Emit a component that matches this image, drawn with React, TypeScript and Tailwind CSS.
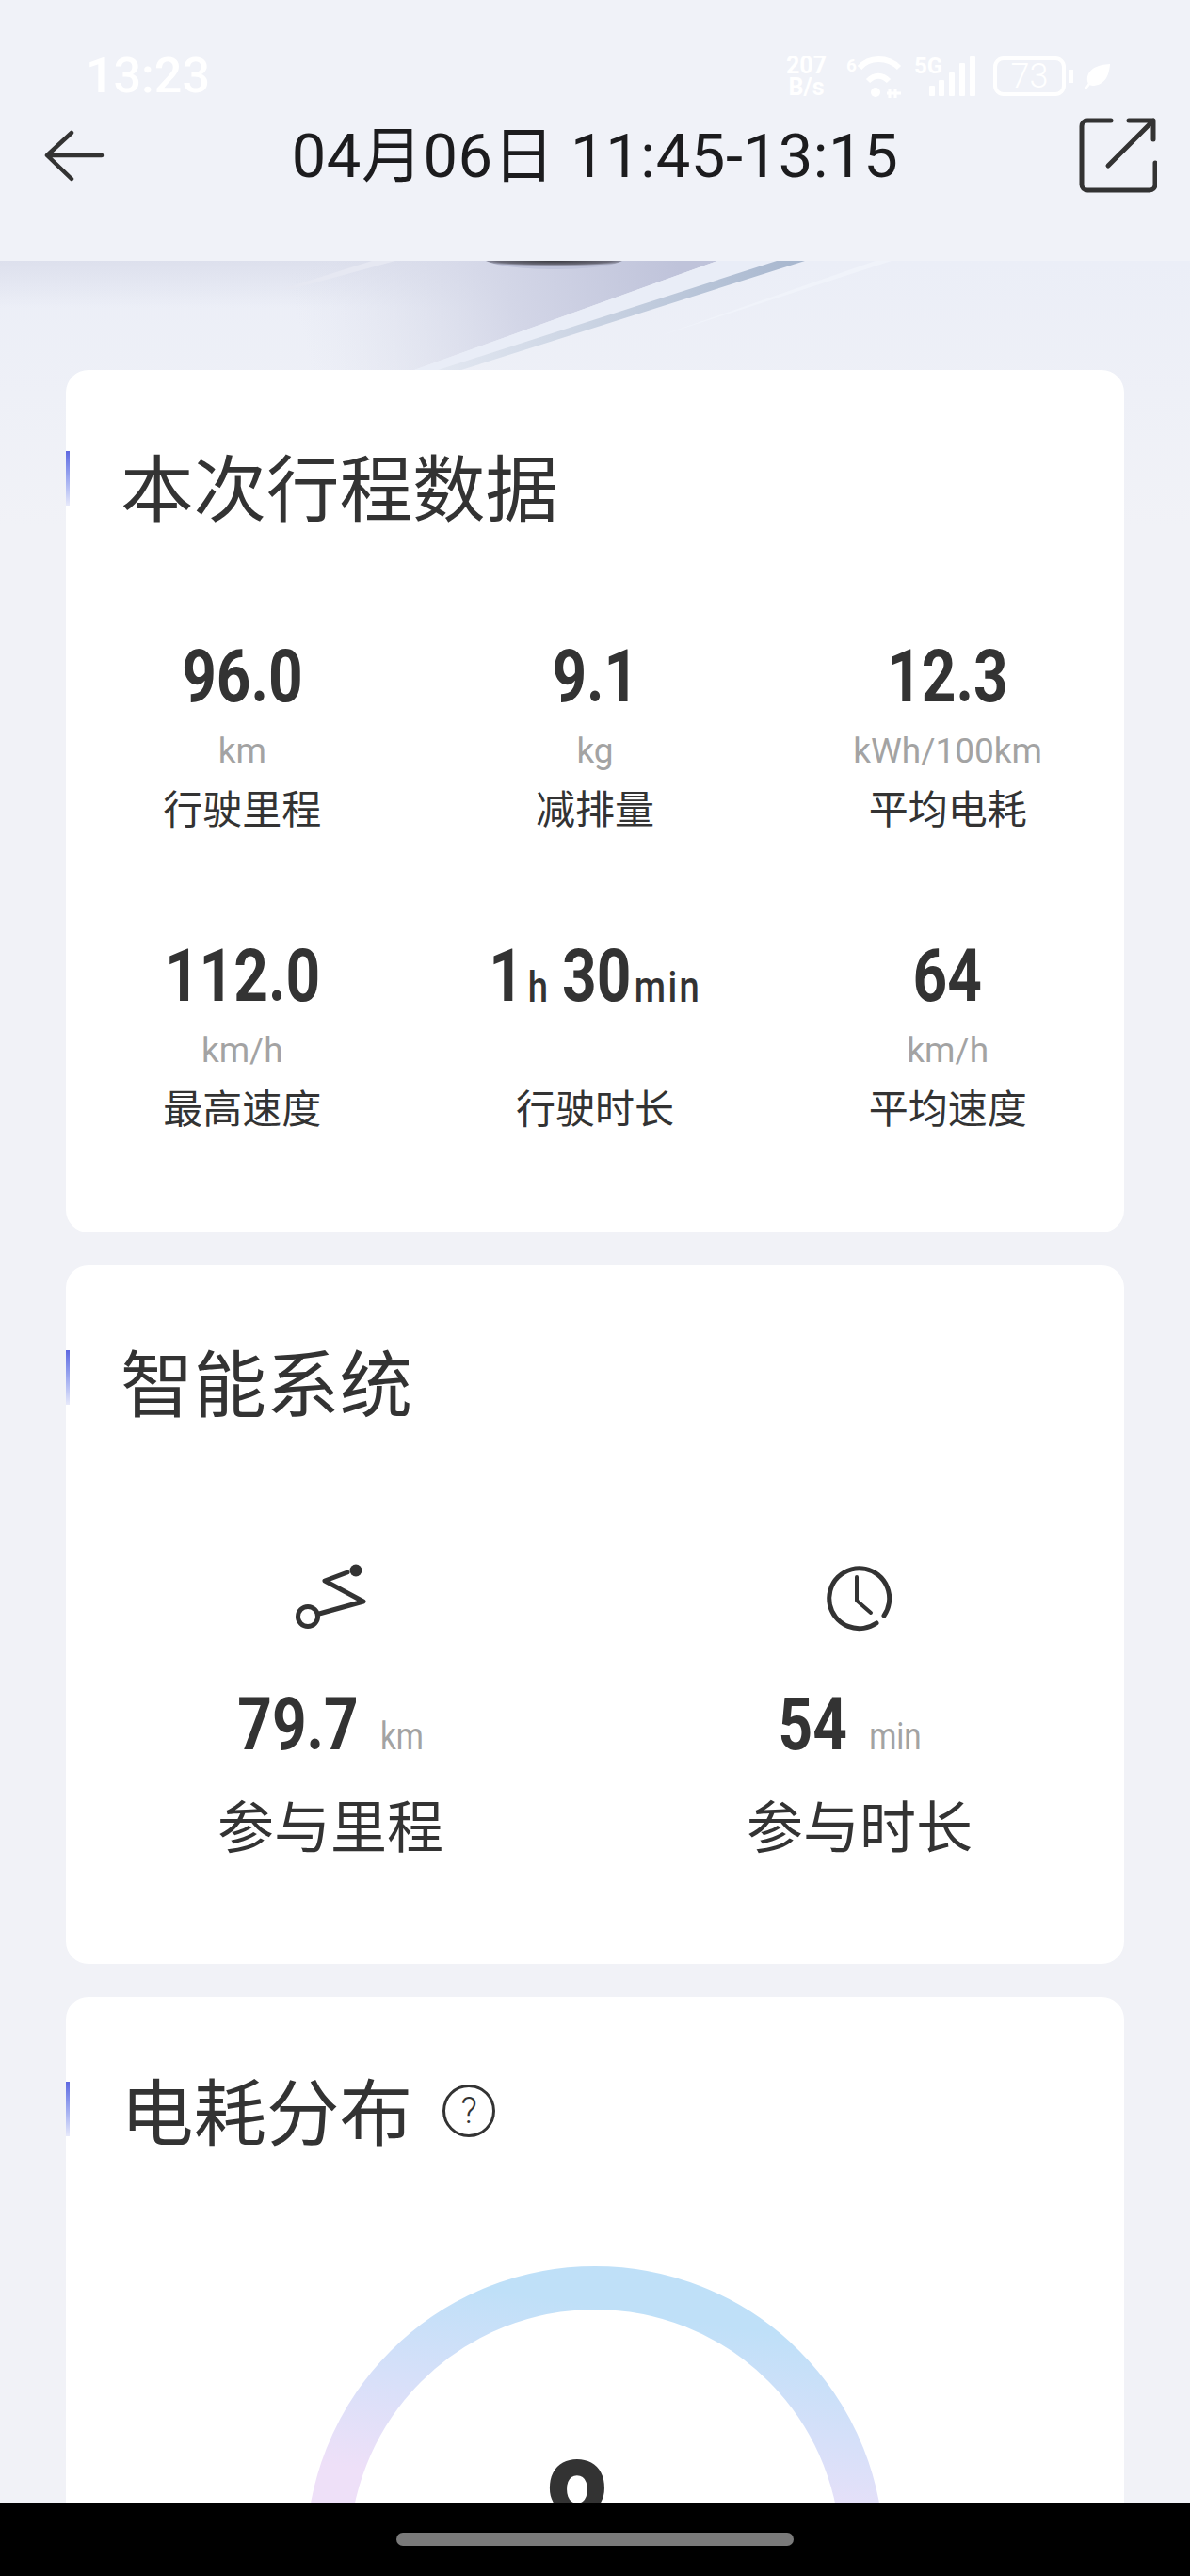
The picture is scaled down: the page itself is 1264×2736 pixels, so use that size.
import type { ReactNode } from 'react'

const numFont = "font-['Roboto',sans-serif]"

const stats = [
  { value: '96.0', unit: 'km', label: '行驶里程' },
  { value: '9.1', unit: 'kg', label: '减排量' },
  { value: '12.3', unit: 'kWh/100km', label: '平均电耗' },
  { value: '112.0', unit: 'km/h', label: '最高速度' },
  { value: null, unit: '', label: '行驶时长' },
  { value: '64', unit: 'km/h', label: '平均速度' },
]

function StatusBar() {
  return (
    <div className="flex h-[124px] items-start justify-between pl-[91px] pr-[84px] pt-[52px] text-white">
      <span className="font-['Roboto',sans-serif] text-[52px] font-medium leading-[58px]">13:23</span>
      <div className="mt-[6px] flex items-center">
        <div className="w-[47px] text-center font-['Roboto',sans-serif] text-[25px] font-bold leading-[23px]">
          207
          <br />
          B/s
        </div>
        <svg className="ml-[19px]" width="60" height="46" viewBox="0 0 60 46" fill="none" stroke="currentColor">
          <text x="0" y="18" fontSize="19" fontWeight="700" fontFamily="Roboto" fill="currentColor" stroke="none">6</text>
          <path d="M14 14C24 2 44 2 56 14" strokeWidth="6" />
          <path d="M23 28C30 21 38 21 45 28" strokeWidth="6" />
          <circle cx="31" cy="40" r="5" fill="currentColor" stroke="none" />
          <path d="M46 46V36M52 36V46M43 41h15" strokeWidth="3" />
        </svg>
        <svg className="ml-[12px]" width="66" height="46" viewBox="0 0 66 46" fill="currentColor">
          <text x="0" y="20" fontSize="24" fontWeight="700" fontFamily="Roboto">5G</text>
          <rect x="16" y="33" width="6" height="11" rx="1" />
          <rect x="26" y="27" width="6" height="17" rx="1" />
          <rect x="37" y="19" width="6" height="25" rx="1" />
          <rect x="48" y="9" width="6" height="35" rx="1" />
          <rect x="59" y="2" width="6" height="42" rx="1" />
        </svg>
        <div className="ml-[18px] flex h-[42px] w-[77px] items-center justify-center rounded-[11px] border-[4px] border-white font-['Roboto',sans-serif] text-[36px] font-light">
          73
        </div>
        <div className="ml-[3px] h-[14px] w-[5px] bg-white" />
        <svg className="ml-[12px]" width="28" height="30" viewBox="0 0 30 30" fill="currentColor">
          <path d="M29 1C15 2 4 6 3 18c0 2 .5 4 1 5L0 29l2 1 4-5c2 1 4 1 6 .5C25 23 28 12 29 1z" />
        </svg>
      </div>
    </div>
  )
}

function Header() {
  return (
    <div className="h-[277px] bg-[#f0f2f8]">
      <StatusBar />
      <div className="relative flex h-[82px] items-center justify-center">
        <svg className="absolute left-[46px] top-[14px]" width="66" height="56" viewBox="0 0 66 56" fill="none" stroke="#333" strokeWidth="4.5" strokeLinecap="round" strokeLinejoin="round">
          <path d="M62 27H5M30 3 4 27l26 25" />
        </svg>
        <span className="mt-[2px] font-['Roboto','Noto_Sans_CJK_SC',sans-serif] text-[65px] leading-[82px] tracking-[0.6px] text-[#1c1c1e]">
          04月06日 11:45-13:15
        </span>
        <svg className="absolute left-[1145px] top-[0px]" width="84" height="84" viewBox="0 0 84 84" fill="none" stroke="#333" strokeWidth="5" strokeLinecap="round" strokeLinejoin="round">
          <path d="M35 4H10a6 6 0 0 0-6 6v62a6 6 0 0 0 6 6h66a6 6 0 0 0 6-6V49" />
          <path d="M32 52 80 4M54 4h26v20" />
        </svg>
      </div>
    </div>
  )
}

function Hero() {
  return (
    <div className="h-[116px]">
      <svg width="1264" height="116" viewBox="0 0 1264 116">
        <defs>
          <linearGradient id="shade" gradientUnits="userSpaceOnUse" x1="720" y1="0" x2="330" y2="110">
            <stop offset="0" stopColor="#bfc3da" />
            <stop offset="0.45" stopColor="#d3d6e7" />
            <stop offset="1" stopColor="#dfe2ee" stopOpacity="0" />
          </linearGradient>
          <linearGradient id="wash" x1="0" y1="0" x2="0" y2="1">
            <stop offset="0" stopColor="#dde0ed" />
            <stop offset="1" stopColor="#dde0ed" stopOpacity="0" />
          </linearGradient>
          <radialGradient id="blob" cx="0.5" cy="0" r="0.6">
            <stop offset="0" stopColor="#3a3a40" />
            <stop offset="0.7" stopColor="#6a6a78" />
            <stop offset="1" stopColor="#bfc3da" />
          </radialGradient>
          <linearGradient id="line" gradientUnits="userSpaceOnUse" x1="840" y1="0" x2="470" y2="116">
            <stop offset="0" stopColor="#a9b8cf" />
            <stop offset="1" stopColor="#e2e7f1" />
          </linearGradient>
        </defs>
        <path d="M0 0H540V50H0z" fill="url(#wash)" />
        <path d="M0 0H762L440 116H0z" fill="url(#shade)" />
        <path d="M395 0H420L310 30H300z" fill="#e6e8f2" />
        <path d="M516 0H661C640 12 540 12 516 0z" fill="url(#blob)" />
        <path d="M762 0H825L465 116H440z" fill="#e9edf7" />
        <path d="M825 0H855L490 116H465z" fill="url(#line)" />
        <path d="M930 0H947L700 80z" fill="#f0f3fa" />
      </svg>
    </div>
  )
}

function Card({ title, extra, height, top, barTop, children }: { title: string; extra?: ReactNode; height: string; top: string; barTop: string; children: ReactNode }) {
  return (
    <div className={`relative overflow-hidden rounded-[24px] bg-white ${height}`}>
      <div className={`absolute left-0 h-[58px] w-[4px] bg-gradient-to-b from-[#5f68e0] to-[#e8eafa] ${barTop}`} />
      <div className={`flex h-[80px] items-center gap-[32px] pl-[58px] text-[77.5px] leading-[80px] text-[#333] ${top}`}>
        {title}
        {extra}
      </div>
      {children}
    </div>
  )
}

function Stat({ value, unit, label }: { value: string | null; unit: string; label: string }) {
  return (
    <div className="flex h-[318px] flex-col items-center text-center">
      <div className={`${numFont} flex h-[80px] scale-x-[0.83] items-center text-[77px] font-bold leading-[80px] text-[#333]`}>
        {value ?? (
          <>
            1<span className="ml-[6px] mr-[18px] self-end text-[46px] font-medium leading-[58px]">h</span>30
            <span className="ml-[4px] self-end text-[46px] font-medium leading-[58px] tracking-[3px]">min</span>
          </>
        )}
      </div>
      <div className="mt-[19px] h-[40px] font-['Roboto',sans-serif] text-[37px] leading-[40px] text-[#a3a3a3]">{unit}</div>
      <div className="mt-[11px] text-[42px] leading-[56px] text-[#333]">{label}</div>
    </div>
  )
}

function Participation({ icon, value, unit, label, shift }: { icon: ReactNode; value: string; unit: string; label: string; shift?: string }) {
  return (
    <div className="flex flex-col items-center">
      <div className="flex h-[80px] items-center">{icon}</div>
      <div className={`${numFont} mt-[54px] flex h-[80px] scale-x-[0.83] items-end ${shift ?? ''}`}>
        <span className="text-[77px] font-bold leading-[80px] text-[#333]">{value}</span>
        <span className="ml-[28px] text-[40px] leading-[54px] text-[#a3a3a3]">{unit}</span>
      </div>
      <div className="mt-[25px] text-[60px] leading-[80px] text-[#333]">{label}</div>
    </div>
  )
}

const RouteIcon = (
  <svg width="100" height="80" viewBox="0 0 100 80" fill="none" stroke="#333" strokeWidth="5" strokeLinecap="round" strokeLinejoin="round">
    <circle cx="77" cy="10" r="6.5" fill="#333" stroke="none" />
    <path d="M68 12 44 21 85 43 38 56" />
    <circle cx="26" cy="59" r="10.5" />
  </svg>
)

const ClockIcon = (
  <svg width="80" height="80" viewBox="0 0 80 80" fill="none" stroke="#333" strokeWidth="5" strokeLinecap="round" strokeLinejoin="round">
    <path d="M66 58A32 32 0 1 0 58 66" />
    <path d="M37 17v25l15 13" strokeWidth="4" />
  </svg>
)

export default function App() {
  return (
    <div className="relative h-[2736px] w-[1264px] overflow-hidden bg-[linear-gradient(#ebeef7_277px,#f1f2f7_560px)] font-['Noto_Sans_CJK_SC',sans-serif]">
      <Header />
      <Hero />
      <div className="flex flex-col gap-[35px] px-[70px]">
        <Card title="本次行程数据" height="h-[916px]" top="mt-[81px]" barTop="top-[86px]">
          <div className="mt-[125px] grid grid-cols-3">
            {stats.map((s) => (
              <Stat key={s.label} {...s} />
            ))}
          </div>
        </Card>
        <Card title="智能系统" height="h-[742px]" top="mt-[81px]" barTop="top-[90px]">
          <div className="mt-[153px] grid grid-cols-2">
            <Participation icon={RouteIcon} value="79.7" unit="km" label="参与里程" />
            <Participation icon={ClockIcon} value="54" unit="min" label="参与时长" shift="-translate-x-[10px]" />
          </div>
        </Card>
        <Card
          title="电耗分布"
          height="h-[700px]"
          top="mt-[78px]"
          barTop="top-[90px]"
          extra={
            <span className="mt-[5px] flex h-[56px] w-[56px] items-center justify-center rounded-full border-[3px] border-[#333] font-['Roboto',sans-serif] text-[38px] font-light leading-none">
              ?
            </span>
          }
        >
          <div className="relative mx-auto mt-[128px] h-[620px] w-[614px]">
            <svg width="614" height="620" viewBox="0 0 614 620" fill="none">
              <defs>
                <linearGradient id="arc" gradientUnits="userSpaceOnUse" x1="320" y1="20" x2="285" y2="250">
                  <stop offset="0.1" stopColor="#bfe0f8" />
                  <stop offset="0.55" stopColor="#d6e0f9" />
                  <stop offset="1" stopColor="#eee0f8" />
                </linearGradient>
              </defs>
              <circle cx="307" cy="307" r="284" stroke="url(#arc)" strokeWidth="46" />
            </svg>
            <div className={`${numFont} absolute left-[251px] top-[174px] origin-left scale-x-[0.83] text-[155px] font-bold leading-[180px] text-[#333]`}>
              8
            </div>
          </div>
        </Card>
      </div>
      <div className="absolute bottom-0 left-0 right-0 flex h-[78px] items-start justify-center bg-black pt-[32px]">
        <div className="h-[14px] w-[422px] rounded-full bg-[#7a7a7a]" />
      </div>
    </div>
  )
}
